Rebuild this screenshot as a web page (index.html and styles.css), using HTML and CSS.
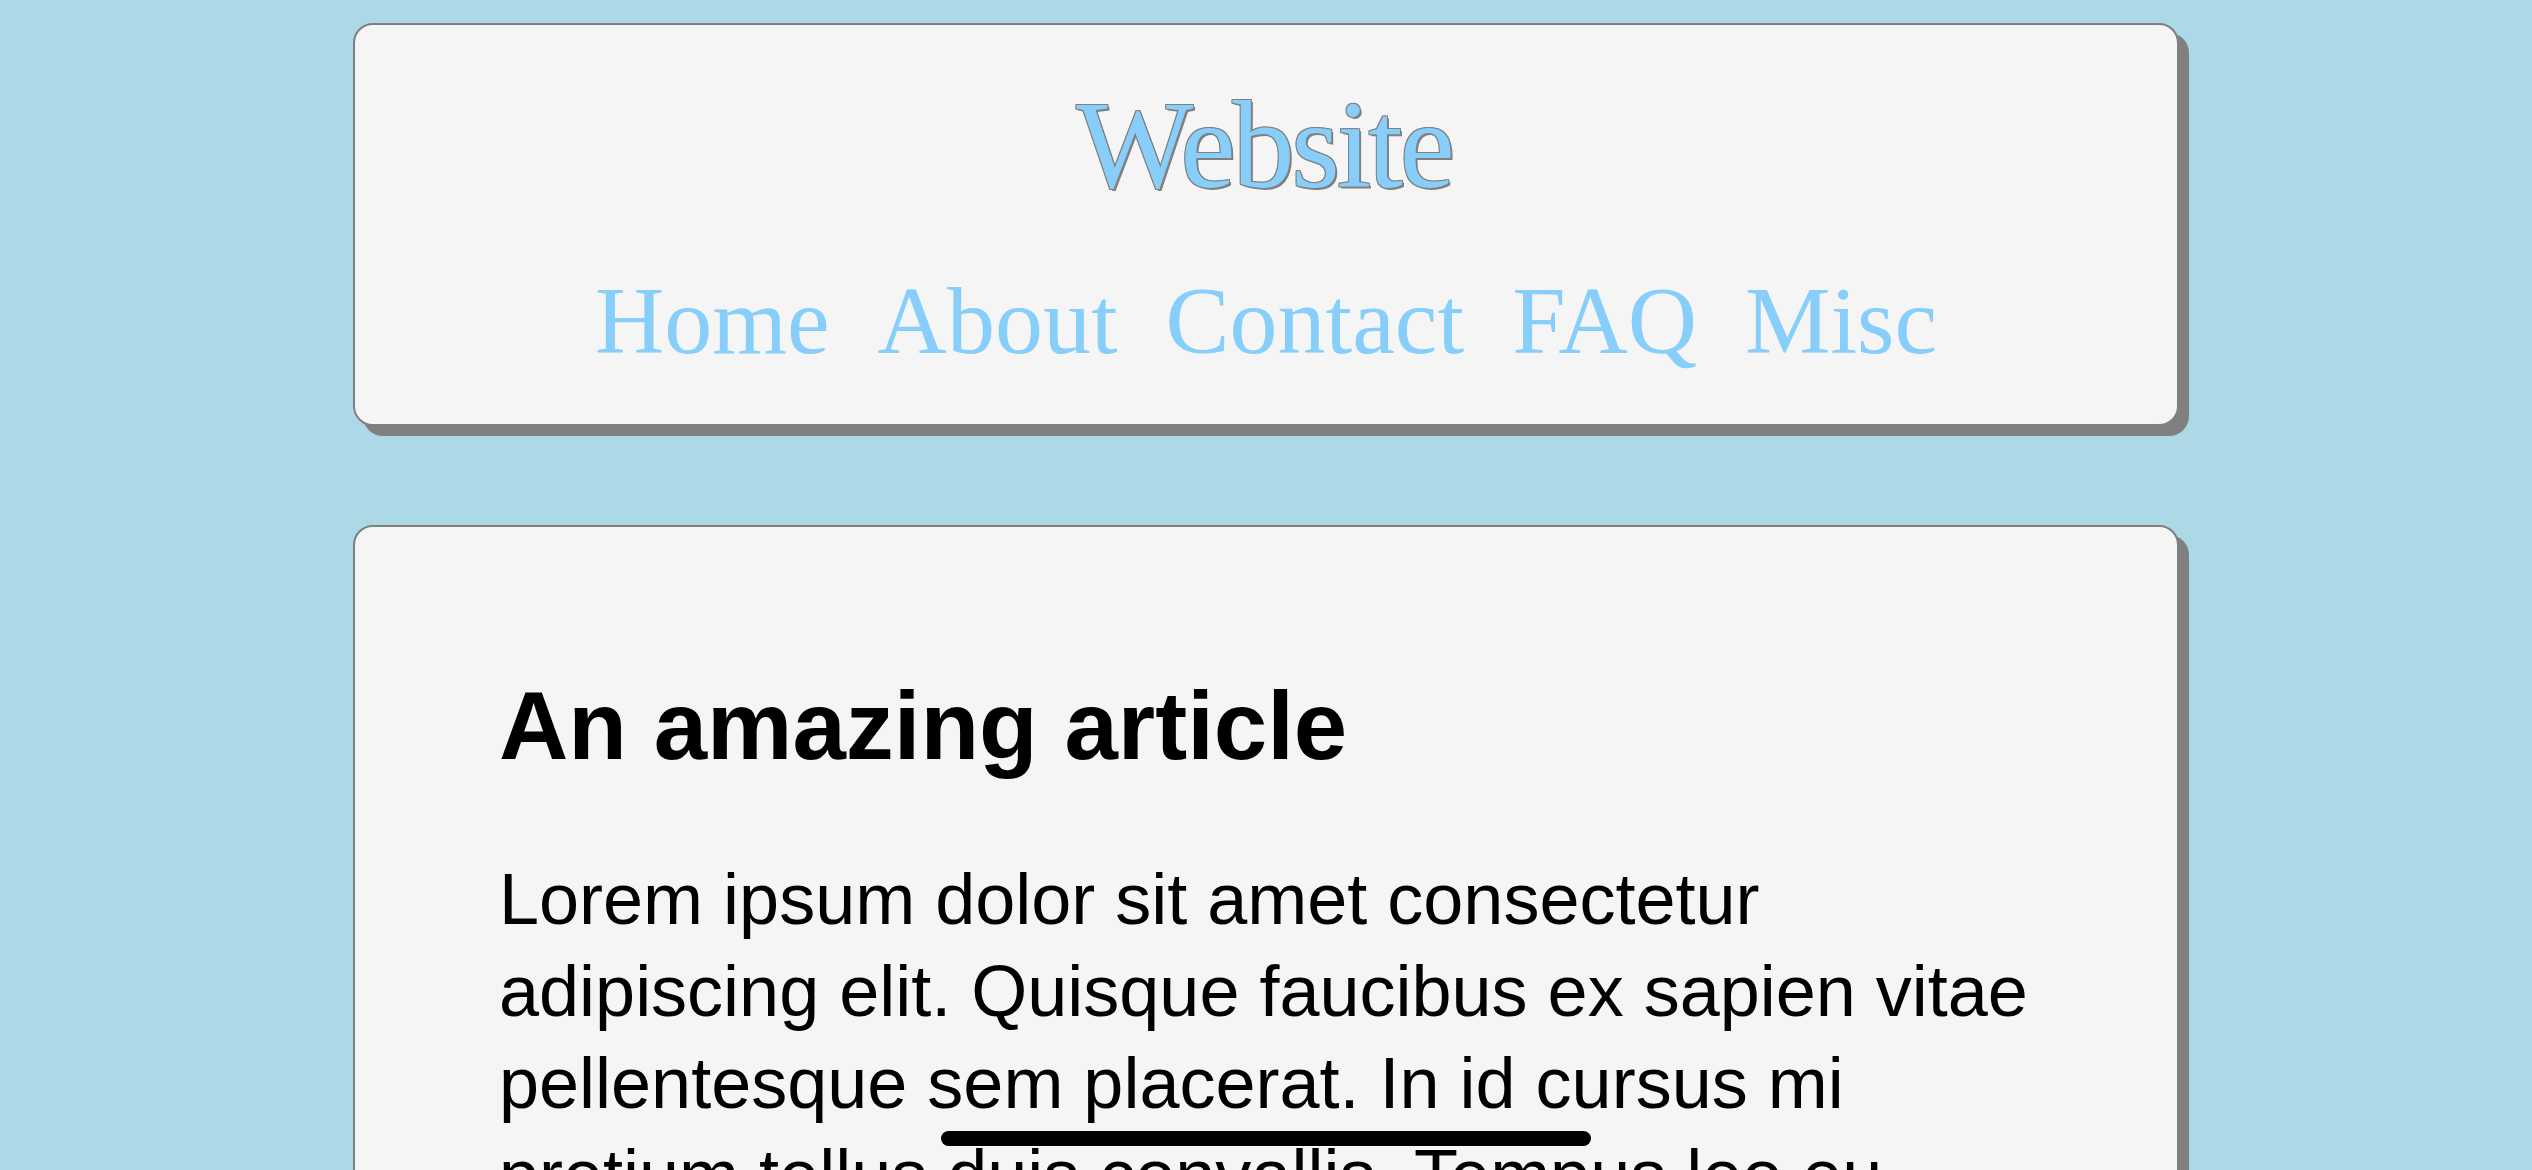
FILE: index.html
```html
<!DOCTYPE html>
<html lang="en">
<head>
<meta charset="utf-8">
<title>Website</title>
<link rel="stylesheet" href="styles.css">
</head>
<body>
<div class="page">
  <header class="card header">
    <h1 class="site-title">Website</h1>
    <nav class="nav">
      <a href="#" class="nav-link">Home</a>
      <a href="#" class="nav-link">About</a>
      <a href="#" class="nav-link">Contact</a>
      <a href="#" class="nav-link">FAQ</a>
      <a href="#" class="nav-link">Misc</a>
    </nav>
  </header>
  <main class="card article">
    <h2 class="article-title">An amazing article</h2>
    <p class="article-text">Lorem ipsum dolor sit amet consectetur adipiscing elit. Quisque faucibus ex sapien vitae pellentesque sem placerat. In id cursus mi pretium tellus duis convallis. Tempus leo eu aenean sed diam urna tempor. Pulvinar vivamus fringilla lacus nec metus bibendum egestas. Iaculis massa nisl malesuada lacinia integer nunc posuere. Ut hendrerit semper vel class aptent taciti sociosqu. Ad litora torquent per conubia nostra inceptos himenaeos.</p>
  </main>
</div>
<div class="home-indicator"></div>
</body>
</html>
```
FILE: styles.css
```css
html, body {
  margin: 0;
  padding: 0;
}

body {
  background: #add8e6;
  font-family: "Liberation Sans", Arial, sans-serif;
  overflow: hidden;
}

.page {
  display: flex;
  flex-direction: column;
  align-items: center;
  gap: 99px;
  padding-top: 23px;
}

.card {
  box-sizing: border-box;
  width: 1826px;
  background: #f5f5f5;
  border: 2px solid #808080;
  border-radius: 20px;
  box-shadow: 10px 10px 0 #808080;
}

.header {
  display: flex;
  flex-direction: column;
  align-items: center;
  gap: 48px;
  padding: 50px 0 48px;
}

.site-title {
  margin: 0 4px 0 0;
  font-family: "Liberation Serif", "Times New Roman", serif;
  font-weight: normal;
  font-size: 124px;
  letter-spacing: -3px;
  line-height: normal;
  color: #87cefa;
  text-shadow: -1px -1px 0 #808080, 1px -1px 0 #808080, -1px 1px 0 #808080, 1px 1px 0 #808080, 2px 2px 0 #808080;
}

.nav {
  display: flex;
  justify-content: center;
  gap: 48px;
  font-family: "Liberation Serif", "Times New Roman", serif;
  font-size: 96px;
  line-height: normal;
}

.nav-link {
  color: #87cefa;
  text-decoration: none;
}

.article {
  padding: 144px;
}

.article-title {
  margin: 0;
  font-size: 96px;
  font-weight: bold;
  line-height: normal;
  color: #000;
}

.article-text {
  margin: 72px 0 0;
  font-size: 72px;
  line-height: 92px;
  color: #000;
}

.home-indicator {
  position: fixed;
  left: 50%;
  bottom: 24px;
  width: 650px;
  height: 15px;
  margin-left: -325px;
  border-radius: 8px;
  background: #000;
}
```
